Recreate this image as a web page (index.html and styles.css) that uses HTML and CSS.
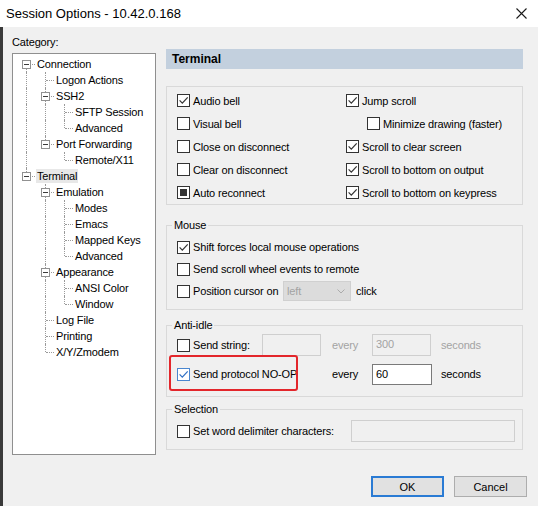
FILE: index.html
```html
<!DOCTYPE html>
<html>
<head>
<meta charset="utf-8">
<title>Session Options</title>
<link rel="stylesheet" href="styles.css">
</head>
<body>
<div class="window">
  <div class="titlebar">
    <span class="title">Session Options - 10.42.0.168</span>
    <svg class="close" width="11" height="11" viewBox="0 0 11 11"><path d="M0.5 0.5 L10.5 10.5 M10.5 0.5 L0.5 10.5" stroke="#1a1a1a" stroke-width="1.1" fill="none"/></svg>
  </div>
  <div class="body">
    <div class="content">
      <div class="leftcol">
        <div class="cat-label">Category:</div>
        <div class="tree">
          <div class="row"><span class="c d"><span class="bx"></span></span><span class="lbl">Connection</span></div>
          <div class="row"><span class="c v"></span><span class="c t"></span><span class="lbl">Logon Actions</span></div>
          <div class="row"><span class="c v"></span><span class="c t"><span class="bx"></span></span><span class="lbl">SSH2</span></div>
          <div class="row"><span class="c v"></span><span class="c v"></span><span class="c t"></span><span class="lbl">SFTP Session</span></div>
          <div class="row"><span class="c v"></span><span class="c v"></span><span class="c e"></span><span class="lbl">Advanced</span></div>
          <div class="row"><span class="c v"></span><span class="c e"><span class="bx"></span></span><span class="lbl">Port Forwarding</span></div>
          <div class="row"><span class="c v"></span><span class="c"></span><span class="c e"></span><span class="lbl">Remote/X11</span></div>
          <div class="row"><span class="c e"><span class="bx"></span></span><span class="lbl sel">Terminal</span></div>
          <div class="row"><span class="c"></span><span class="c t"><span class="bx"></span></span><span class="lbl">Emulation</span></div>
          <div class="row"><span class="c"></span><span class="c v"></span><span class="c t"></span><span class="lbl">Modes</span></div>
          <div class="row"><span class="c"></span><span class="c v"></span><span class="c t"></span><span class="lbl">Emacs</span></div>
          <div class="row"><span class="c"></span><span class="c v"></span><span class="c t"></span><span class="lbl">Mapped Keys</span></div>
          <div class="row"><span class="c"></span><span class="c v"></span><span class="c e"></span><span class="lbl">Advanced</span></div>
          <div class="row"><span class="c"></span><span class="c t"><span class="bx"></span></span><span class="lbl">Appearance</span></div>
          <div class="row"><span class="c"></span><span class="c v"></span><span class="c t"></span><span class="lbl">ANSI Color</span></div>
          <div class="row"><span class="c"></span><span class="c v"></span><span class="c e"></span><span class="lbl">Window</span></div>
          <div class="row"><span class="c"></span><span class="c t"></span><span class="lbl">Log File</span></div>
          <div class="row"><span class="c"></span><span class="c t"></span><span class="lbl">Printing</span></div>
          <div class="row"><span class="c"></span><span class="c e"></span><span class="lbl">X/Y/Zmodem</span></div>
        </div>
      </div>

      <div class="rightcol">
        <div class="panel-head">Terminal</div>

        <div class="group g-main">
          <div class="opt"><span class="cb"><svg viewBox="0 0 11 11"><path d="M1.6 5.4 L4.3 8.2 L9.7 2.3" /></svg></span>Audio bell</div>
          <div class="opt"><span class="cb"><svg viewBox="0 0 11 11"><path d="M1.6 5.4 L4.3 8.2 L9.7 2.3" /></svg></span>Jump scroll</div>
          <div class="opt"><span class="cb"></span>Visual bell</div>
          <div class="opt indent"><span class="cb"></span>Minimize drawing (faster)</div>
          <div class="opt"><span class="cb"></span>Close on disconnect</div>
          <div class="opt"><span class="cb"><svg viewBox="0 0 11 11"><path d="M1.6 5.4 L4.3 8.2 L9.7 2.3" /></svg></span>Scroll to clear screen</div>
          <div class="opt"><span class="cb"></span>Clear on disconnect</div>
          <div class="opt"><span class="cb"><svg viewBox="0 0 11 11"><path d="M1.6 5.4 L4.3 8.2 L9.7 2.3" /></svg></span>Scroll to bottom on output</div>
          <div class="opt"><span class="cb mixed"></span>Auto reconnect</div>
          <div class="opt"><span class="cb"><svg viewBox="0 0 11 11"><path d="M1.6 5.4 L4.3 8.2 L9.7 2.3" /></svg></span>Scroll to bottom on keypress</div>
        </div>

        <fieldset class="group g-mouse">
          <legend>Mouse</legend>
          <div class="opt"><span class="cb"><svg viewBox="0 0 11 11"><path d="M1.6 5.4 L4.3 8.2 L9.7 2.3" /></svg></span>Shift forces local mouse operations</div>
          <div class="opt"><span class="cb"></span>Send scroll wheel events to remote</div>
          <div class="opt"><span class="cb"></span><span class="pos-lbl">Position cursor on</span>
            <span class="combo"><span>left</span><svg width="8" height="5" viewBox="0 0 8 5"><path d="M0.5 0.5 L4 4 L7.5 0.5" fill="none" stroke="#ababab" stroke-width="1"/></svg></span>
            <span class="after-combo">click</span></div>
        </fieldset>

        <fieldset class="group g-anti">
          <legend>Anti-idle</legend>
          <div class="opt"><span class="cb"></span>Send string:</div>
          <span class="inp dis"></span>
          <span class="word dis-t">every</span>
          <span class="inp dis">300</span>
          <span class="word2 dis-t">seconds</span>

          <div class="opt span2"><span class="hl-wrap"><span class="cb blue"><svg viewBox="0 0 11 11"><path d="M1.6 5.4 L4.3 8.2 L9.7 2.3" /></svg></span>Send protocol NO-OP<span class="highlight"></span></span></div>
          <span class="word">every</span>
          <span class="inp on">60</span>
          <span class="word2">seconds</span>
        </fieldset>

        <fieldset class="group g-sel">
          <legend>Selection</legend>
          <div class="opt sel-row"><span class="cb"></span>Set word delimiter characters:<span class="inp dis wide"></span></div>
        </fieldset>
      </div>
    </div>

    <div class="buttons">
      <button class="btn btn-ok">OK</button>
      <button class="btn">Cancel</button>
    </div>
  </div>
</div>
</body>
</html>
```

FILE: styles.css
```css
html, body {
  margin: 0;
  padding: 0;
}
body {
  background: #f0f0f0;
  font-family: "Liberation Sans", Arial, sans-serif;
  font-size: 11px;
  letter-spacing: -0.15px;
  color: #000;
}
.window {
  width: 538px;
  height: 506px;
  display: flex;
  flex-direction: column;
  overflow: hidden;
}
.titlebar {
  height: 27px;
  flex: none;
  background: #fff;
  display: flex;
  align-items: center;
  justify-content: space-between;
  padding: 0 11px 1px 6px;
  box-sizing: border-box;
}
.title {
  font-size: 13px;
  letter-spacing: 0;
  color: #000;
}
.close {
  display: block;
}
.body {
  flex: 1;
  border-left: 3px solid #3a3a3a;
  display: flex;
  flex-direction: column;
}
.content {
  display: flex;
  gap: 10px;
  padding: 8px 0 0 9px;
}
.leftcol {
  width: 144px;
  flex: none;
}
.cat-label {
  line-height: 14px;
  height: 14px;
}
.tree {
  margin-top: 4px;
  height: 402px;
  box-sizing: border-box;
  border: 1px solid #8f8f8f;
  background: #fff;
  padding: 2px 0 0 4px;
}
.row {
  display: flex;
  height: 16px;
  line-height: 16px;
  white-space: nowrap;
}
.c {
  width: 19px;
  height: 16px;
  flex: none;
  position: relative;
}
.c.v::before,
.c.t::before,
.c.e::before,
.c.d::before {
  content: "";
  position: absolute;
  left: 9px;
  border-left: 1px dotted #9a9a9a;
}
.c.v::before, .c.t::before { top: 0; bottom: 0; }
.c.e::before { top: 0; height: 8px; }
.c.d::before { top: 8px; bottom: 0; }
.c.t::after,
.c.e::after,
.c.d::after {
  content: "";
  position: absolute;
  left: 10px;
  top: 8px;
  width: 8px;
  border-top: 1px dotted #9a9a9a;
}
.bx {
  position: absolute;
  left: 5px;
  top: 4px;
  width: 9px;
  height: 9px;
  box-sizing: border-box;
  border: 1px solid #919191;
  background: #fff;
  z-index: 1;
}
.bx::after {
  content: "";
  position: absolute;
  left: 1px;
  top: 3px;
  width: 5px;
  height: 1px;
  background: #3c3c3c;
}
.lbl {
  padding: 0 1px;
}
.lbl.sel {
  background: #e8e8e8;
  line-height: 14px;
  height: 14px;
  margin-top: 1px;
}

.rightcol {
  width: 357px;
  flex: none;
  margin-top: 14px;
}
.panel-head {
  height: 20px;
  line-height: 20px;
  background: #c3d0de;
  font-weight: bold;
  font-size: 12px;
  letter-spacing: 0;
  padding-left: 6px;
}
.group {
  border: 1px solid #d9d9d9;
  box-sizing: border-box;
  margin: 0;
  min-width: 0;
}
.g-main {
  margin-top: 17px;
  height: 119px;
  padding: 2px 0 0 10px;
  display: grid;
  grid-template-columns: 169px 1fr;
  grid-auto-rows: 23px;
}
.opt {
  display: flex;
  align-items: center;
  white-space: nowrap;
}
.opt.indent {
  padding-left: 21px;
}
.cb {
  width: 13px;
  height: 13px;
  box-sizing: border-box;
  border: 1px solid #333;
  background: #fff;
  margin-right: 3px;
  flex: none;
  position: relative;
}
.cb svg {
  display: block;
  width: 11px;
  height: 11px;
}
.cb svg path {
  fill: none;
  stroke: #333;
  stroke-width: 1.2;
}
.cb.mixed::after {
  content: "";
  position: absolute;
  left: 2px;
  top: 2px;
  width: 7px;
  height: 7px;
  background: #333;
}
.cb.blue {
  border-color: #4a86cf;
}
.cb.blue svg path {
  stroke: #2f6fc4;
}

fieldset.group {
  padding-left: 10px;
  padding-right: 7px;
}
legend {
  padding: 0 2px;
  margin-left: -5px;
  line-height: 14px;
  height: 14px;
}
.g-mouse {
  margin-top: 13px;
  padding-top: 4px;
  padding-bottom: 7px;
  display: grid;
  grid-auto-rows: 22px;
}
.pos-lbl {
  width: 90px;
  flex: none;
}
.combo {
  width: 68px;
  height: 20px;
  box-sizing: border-box;
  background: #dcdcdc;
  border: 1px solid #d0d0d0;
  display: flex;
  align-items: center;
  justify-content: space-between;
  padding: 0 5px 0 3px;
  color: #a3a3a3;
}
.after-combo {
  margin-left: 5px;
}

.g-anti {
  margin-top: 8px;
  padding-top: 2px;
  padding-bottom: 11px;
  display: grid;
  grid-template-columns: 85px 59px 51px 60px auto;
  grid-auto-rows: 22px;
  row-gap: 7px;
  align-items: center;
}
.span2 {
  grid-column: 1 / 3;
}
.inp {
  display: block;
  height: 22px;
  line-height: 19px;
  box-sizing: border-box;
  border: 1px solid #cfcfcf;
  background: #f0f0f0;
  padding-left: 3px;
}
.inp.dis {
  color: #a3a3a3;
  width: 59px;
}
.inp.on {
  border-color: #7a7a7a;
  background: #fff;
  height: 21px;
  width: 60px;
}
.word {
  padding-left: 11px;
}
.word2 {
  padding-left: 9px;
}
.dis-t {
  color: #a3a3a3;
}
.hl-wrap {
  position: relative;
  display: flex;
  align-items: center;
}
.highlight {
  position: absolute;
  left: -8px;
  top: -13px;
  width: 129px;
  height: 36px;
  box-sizing: border-box;
  border: 2.5px solid #e3262b;
  border-radius: 3px;
}

.g-sel {
  margin-top: 5px;
  padding-top: 4px;
  padding-bottom: 7px;
}
.sel-row {
  height: 22px;
}
.inp.wide {
  width: 164px;
  margin-left: auto;
}

.buttons {
  display: flex;
  justify-content: flex-end;
  gap: 10px;
  padding-right: 11px;
  margin-top: 21px;
}
.btn {
  width: 73px;
  height: 21px;
  box-sizing: border-box;
  border: 1px solid #adadad;
  background: #e1e1e1;
  font-family: "Liberation Sans", Arial, sans-serif;
  font-size: 11px;
  color: #000;
  padding: 0;
  margin: 0;
}
.btn-ok {
  border: 2px solid #2a7bd4;
}
```
